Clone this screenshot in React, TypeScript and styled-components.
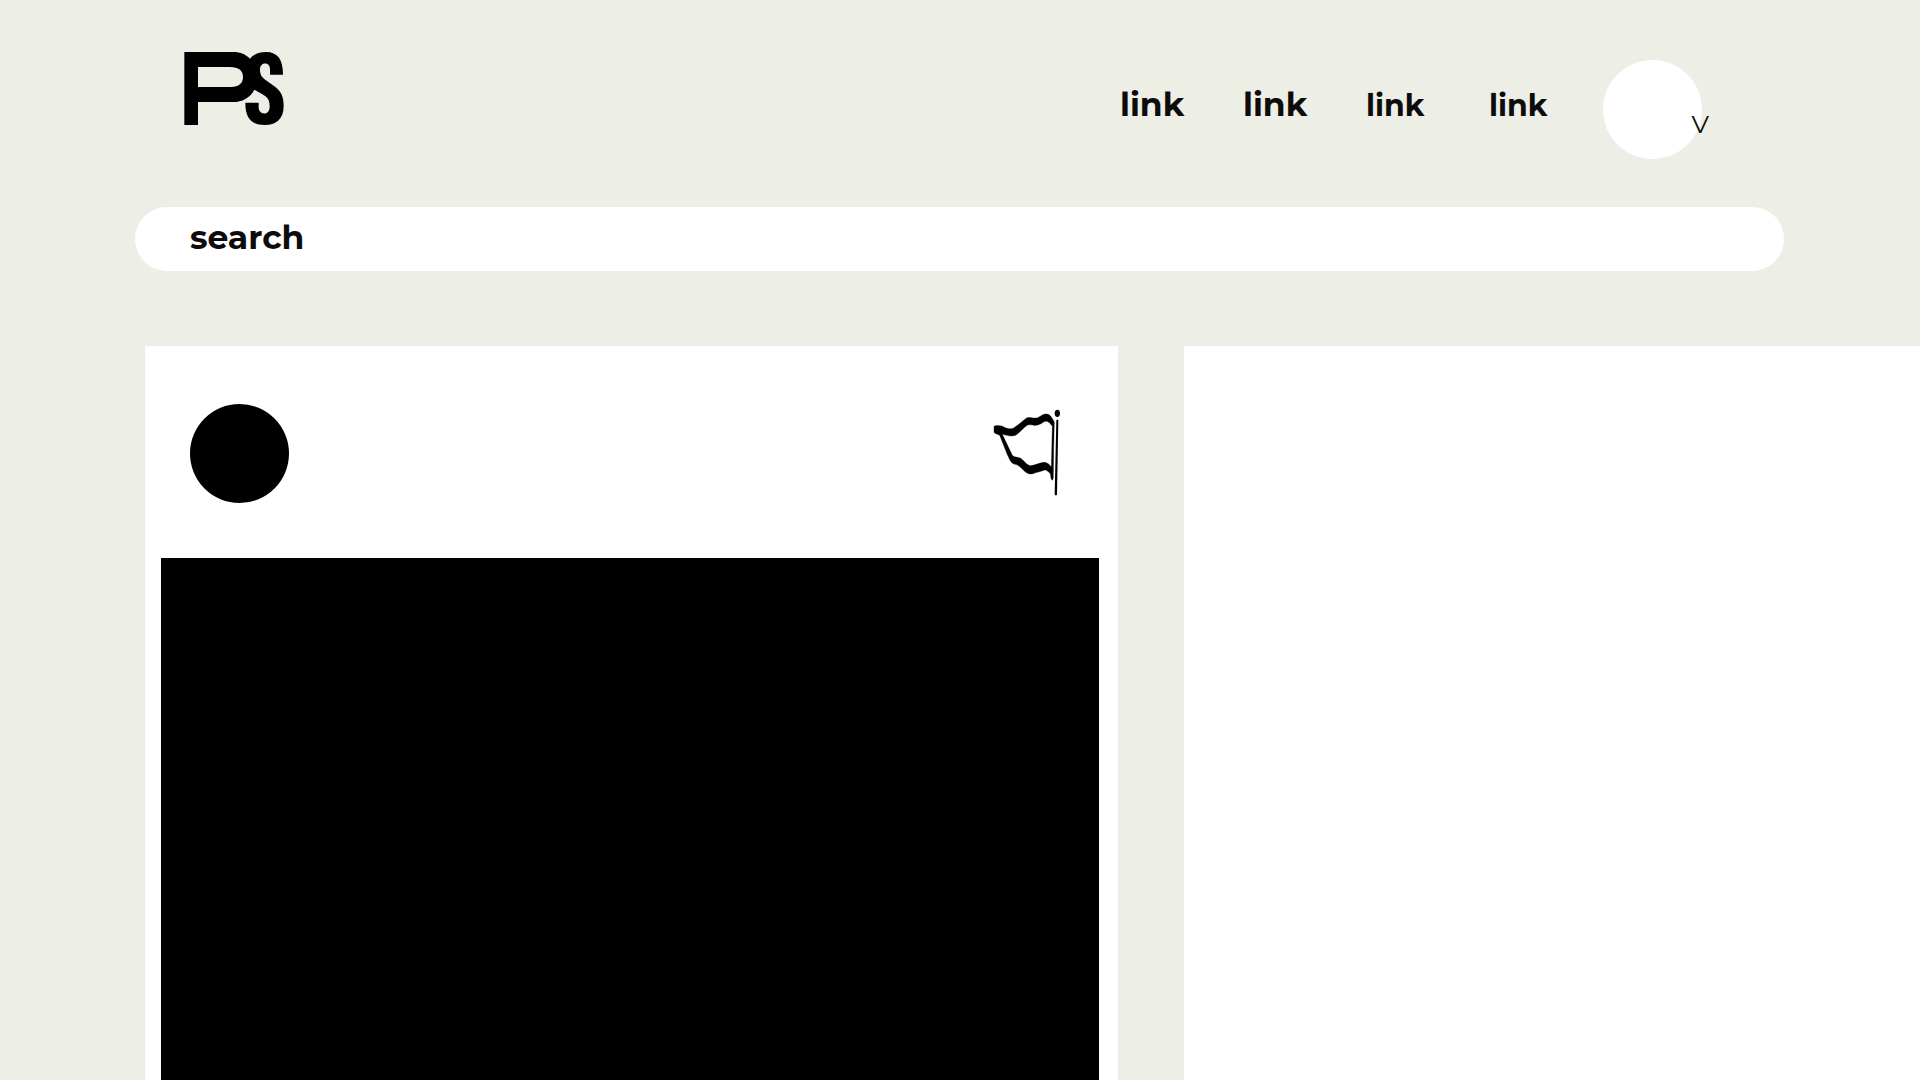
import React from "react";
import styled, { createGlobalStyle } from "styled-components";

const GlobalStyle = createGlobalStyle`
  *, *::before, *::after { box-sizing: border-box; }
  body {
    margin: 0;
    background: #edeee5;
    color: #0c0c0c;
    font-family: Montserrat, Inter, "Open Sans", sans-serif;
  }
`;

const Page = styled.div`
  display: flex;
  flex-direction: column;
  min-height: 100vh;
  overflow: hidden;
`;

const Header = styled.header`
  display: flex;
  justify-content: space-between;
  align-items: flex-start;
  padding: 52px 218px 48px 184px;
`;

const LogoLink = styled.a`
  display: block;
  color: #000;

  svg {
    display: block;
  }
`;

const Nav = styled.nav`
  display: flex;
  align-items: center;
  gap: 48px;
  padding-top: 8px;
`;

const LinkList = styled.ul`
  display: grid;
  grid-template-columns: repeat(4, 66px);
  align-items: baseline;
  gap: 57px;
  margin: 0;
  padding: 0 0 10px;
  list-style: none;
`;

const NavLink = styled.a<{ $large?: boolean }>`
  color: inherit;
  font-size: ${(p) => (p.$large ? 33 : 30)}px;
  font-weight: 700;
  line-height: 40px;
  text-decoration: none;
`;

const AccountButton = styled.button`
  position: relative;
  width: 99px;
  height: 99px;
  padding: 0;
  border: 0;
  border-radius: 50%;
  background: #fff;
  color: #0c0c0c;
  font: inherit;
  cursor: pointer;
`;

const Caret = styled.span`
  position: absolute;
  right: -7px;
  bottom: 20px;
  font-size: 25px;
  font-weight: 400;
  line-height: 30px;
`;

const SearchForm = styled.form`
  margin: 0 136px 0 135px;
`;

const SearchInput = styled.input`
  display: block;
  width: 100%;
  height: 64px;
  padding: 0 55px 4px;
  border: 0;
  border-radius: 32px;
  background: #fff;
  color: inherit;
  font: inherit;
  font-size: 33px;
  font-weight: 700;

  &::placeholder {
    color: #0c0c0c;
    opacity: 1;
  }
`;

const Feed = styled.main`
  flex: 1;
  display: grid;
  grid-auto-flow: column;
  grid-auto-columns: calc(50vw + 13px);
  gap: 66px;
  margin-top: 75px;
  padding-left: 145px;
`;

const Card = styled.article`
  display: flex;
  flex-direction: column;
  background: #fff;
`;

const CardHeader = styled.div`
  display: flex;
  justify-content: space-between;
  align-items: flex-start;
  padding: 58px 57px 55px 45px;
`;

const Author = styled.a`
  width: 99px;
  height: 99px;
  border-radius: 50%;
  background: #000;
`;

const FlagButton = styled.button`
  display: block;
  padding: 5px 0 0;
  border: 0;
  background: none;
  color: #000;
  cursor: pointer;

  svg {
    display: block;
  }
`;

const Media = styled.div`
  flex: 1;
  margin: 0 19px 0 16px;
  background: #000;
`;

const Logo = () => (
  <svg width="100" height="73" viewBox="42 36 300 219" fill="currentColor" aria-hidden="true">
    <path
      fillRule="evenodd"
      d="M43 36H190C212 36 228 44 240 56C250 43 267 36 288 36C323 36 339 58 339 104H300V87C300 65 270 65 270 88C270 106 275 112 290 122L312 138C332 153 341 167 341 198C341 238 318 255 284 255C246 255 226 236 226 188H266V202C266 227 299 227 299 200C299 178 292 172 276 162L253 149C240 174 216 186 190 186H84V255H43ZM84 81V141H184C206 141 219 130 219 111C219 92 206 81 180 81Z"
    />
  </svg>
);

const Flag = () => (
  <svg width="68" height="87" viewBox="40 43 204 261" fill="currentColor" aria-hidden="true">
    <path
      fillRule="evenodd"
      stroke="currentColor"
      strokeWidth="1"
      d="M43 95C48 91 60 92 67 94C78 101 94 106 103 99C118 90 129 77 142 69C152 66 162 73 174 69C185 63 192 56 202 58C213 59 220 75 224 82L222 160L221 250Q217 264 214 250L212 237C205 231 200 224 193 227C181 231 169 234 160 237C148 241 138 234 131 226C121 217 115 210 106 209C93 207 88 190 81 175L60 122C52 117 45 118 43 112ZM68 119L98 182C104 189 114 186 123 191C134 198 139 210 151 213C166 213 178 204 192 203C202 202 209 209 215 217L218 95C211 86 206 79 199 80C188 82 183 91 170 92C159 93 152 88 143 92C132 99 120 114 108 122C95 127 80 122 68 119Z"
    />
    <ellipse cx="233" cy="56" rx="8" ry="11" />
    <path d="M230 77Q233 72 236 77L232 300Q228 304 225 300Z" />
  </svg>
);

const links = [
  { href: "#one", large: true },
  { href: "#two", large: true },
  { href: "#three", large: false },
  { href: "#four", large: false },
];

export default function App() {
  return (
    <>
      <GlobalStyle />
      <Page>
        <Header>
          <LogoLink href="#home" aria-label="PS">
            <Logo />
          </LogoLink>
          <Nav>
            <LinkList>
              {links.map((link) => (
                <li key={link.href}>
                  <NavLink href={link.href} $large={link.large}>
                    link
                  </NavLink>
                </li>
              ))}
            </LinkList>
            <AccountButton type="button" aria-label="Account">
              <Caret>V</Caret>
            </AccountButton>
          </Nav>
        </Header>
        <SearchForm role="search">
          <SearchInput type="search" aria-label="search" placeholder="search" />
        </SearchForm>
        <Feed>
          <Card>
            <CardHeader>
              <Author href="#author" aria-label="Author" />
              <FlagButton type="button" aria-label="Flag">
                <Flag />
              </FlagButton>
            </CardHeader>
            <Media />
          </Card>
          <Card />
        </Feed>
      </Page>
    </>
  );
}
